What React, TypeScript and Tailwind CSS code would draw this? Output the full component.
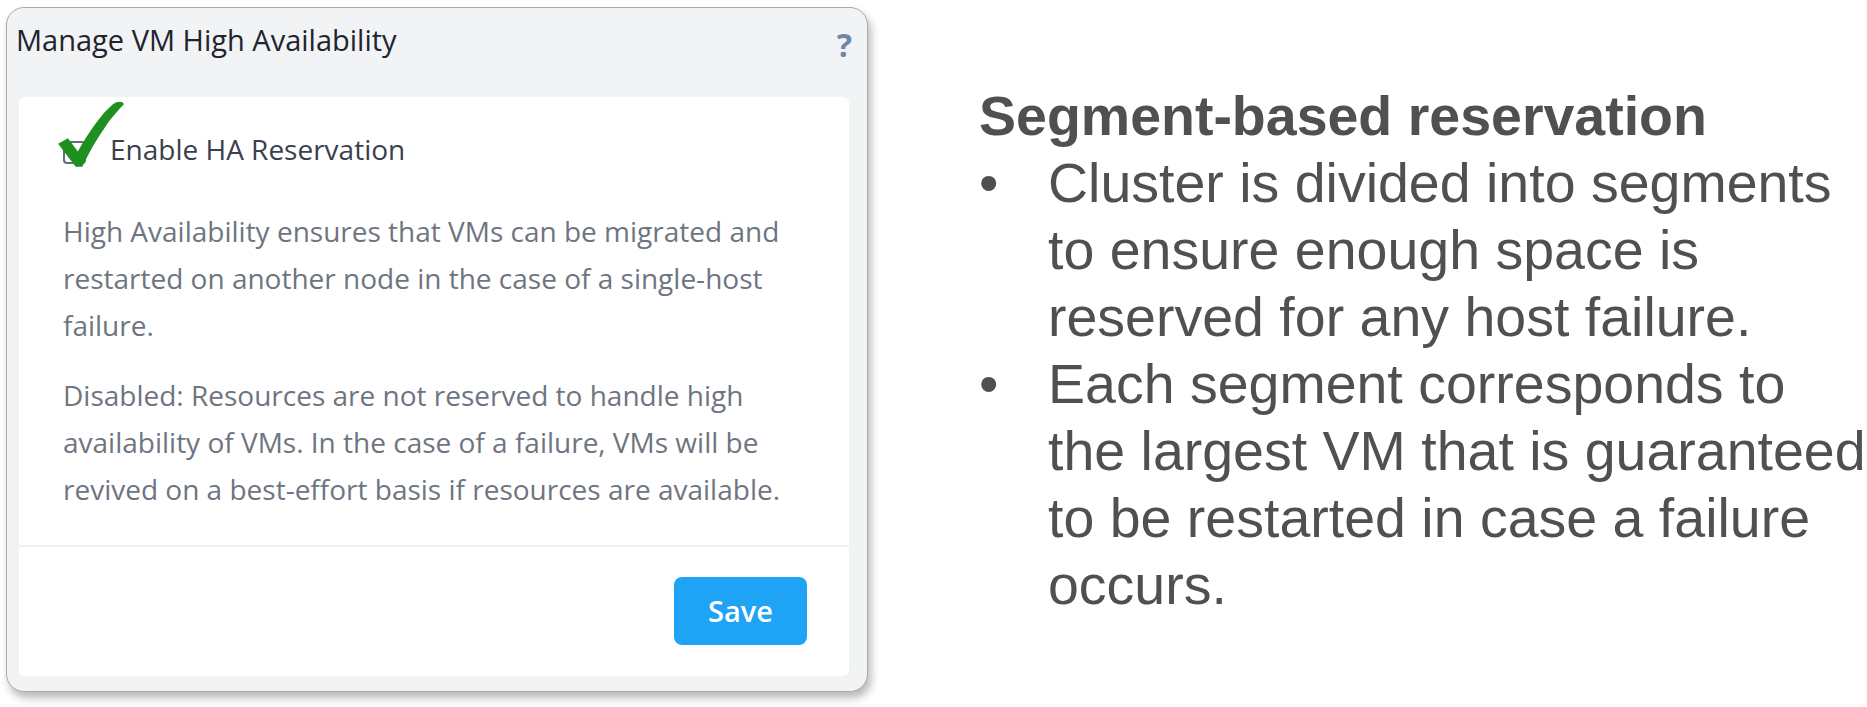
import React from "react";

/* ---------- Check mark drawn over the checkbox ---------- */
function BigCheck() {
  return (
    <svg
      className="absolute left-[50px] top-[93px] w-[68px] h-[68px] pointer-events-none"
      viewBox="0 0 62 62"
    >
      <path
        d="M1 39 L10 34 L19 46 C28 30 40 12 51 3 C55 0 60 0 61 3 C58 6 50 15 45 22 C36 35 29 47 23 60 L17 60 Z"
        fill="#1f8f22"
      />
    </svg>
  );
}

/* ---------- Dialog ---------- */
function HaDialog() {
  return (
    <div className="relative ml-[6px] mt-[7px] w-[862px] h-[685px] rounded-[18px] border border-[#a9a9a9] bg-[#f2f3f5] shadow-[3px_6px_8px_rgba(0,0,0,0.28)] flex flex-col font-['Open_Sans',sans-serif]">
      {/* HEADER */}
      <div className="h-[89px] flex justify-between items-start shrink-0">
        <h2 className="ml-[9px] mt-[12px] text-[29px] leading-[39px] text-[#20242e]">
          Manage VM High Availability
        </h2>
        <span className="mr-[15px] mt-[16px] text-[32px] leading-[42px] font-bold text-[#6f87a5]">
          ?
        </span>
      </div>

      {/* CARD */}
      <div className="ml-[12px] mr-[18px] mb-[15px] flex-1 bg-white rounded-[6px] flex flex-col">
        <div className="pl-[44px] pt-[34px] pb-[32px] text-[28px]">
          <label className="flex items-start gap-[24px] leading-[37px] text-[#3a404c]">
            <span className="mt-[10px] w-[23px] h-[23px] rounded-[4px] border-2 border-[#5f6d80] bg-white shrink-0" />
            Enable HA Reservation
          </label>

          <p className="mt-[40px] leading-[47px] text-[#6e7581] whitespace-nowrap">
            High Availability ensures that VMs can be migrated and
            <br />
            restarted on another node in the case of a single-host
            <br />
            failure.
          </p>
          <p className="mt-[23px] leading-[47px] text-[#6e7581] whitespace-nowrap">
            Disabled: Resources are not reserved to handle high
            <br />
            availability of VMs. In the case of a failure, VMs will be
            <br />
            revived on a best-effort basis if resources are available.
          </p>
        </div>

        {/* FOOTER */}
        <div className="flex-1 border-t-2 border-[#eef0f2] flex justify-end items-start pt-[30px] pr-[42px]">
          <button className="w-[133px] h-[68px] rounded-[8px] bg-[#1fa3f4] text-white text-[29px] font-semibold">
            Save
          </button>
        </div>
      </div>

      <BigCheck />
    </div>
  );
}

/* ---------- Slide notes ---------- */
const bullets = [
  [
    "Cluster is divided into segments",
    "to ensure enough space is",
    "reserved for any host failure.",
  ],
  [
    "Each segment corresponds to",
    "the largest VM that is guaranteed",
    "to be restarted in case a failure",
    "occurs.",
  ],
];

function Notes() {
  return (
    <div className="ml-[111px] mt-[83px] text-[#4f5052] text-[55.5px] leading-[67px] font-['Liberation_Sans',Arial,sans-serif] whitespace-nowrap">
      <h3 className="font-bold">Segment-based reservation</h3>
      <ul>
        {bullets.map((lines, i) => (
          <li key={i} className="flex">
            <span className="w-[69px] shrink-0">•</span>
            <div>
              {lines.map((l) => (
                <div key={l}>{l}</div>
              ))}
            </div>
          </li>
        ))}
      </ul>
    </div>
  );
}

export default function App() {
  return (
    <div className="w-[1867px] h-[707px] bg-white flex items-start overflow-hidden">
      <HaDialog />
      <Notes />
    </div>
  );
}
